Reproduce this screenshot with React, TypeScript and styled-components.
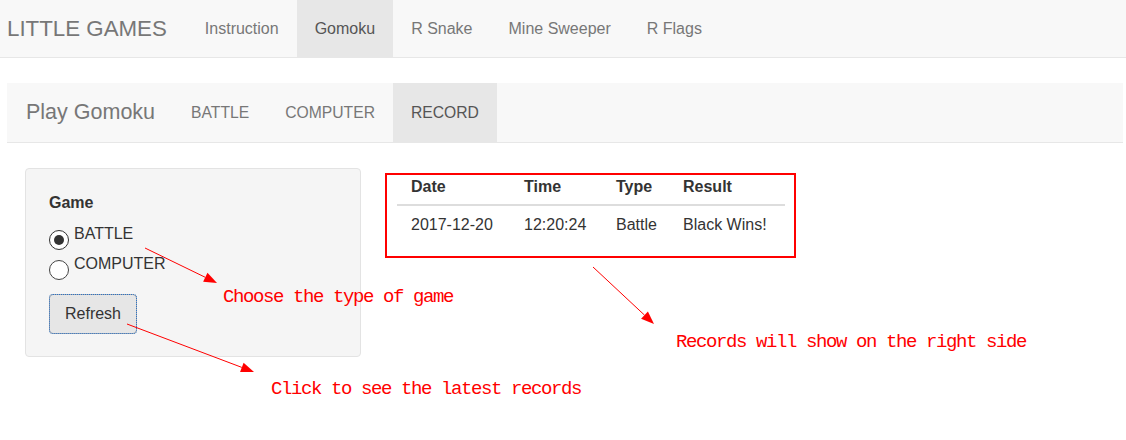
import React from "react";
import styled, { createGlobalStyle } from "styled-components";

const GlobalStyle = createGlobalStyle`
  html, body {
    margin: 0;
    padding: 0;
    background: #ffffff;
  }
  body {
    font-family: "Liberation Sans", Arial, sans-serif;
    color: #333333;
  }
  * { box-sizing: border-box; }
`;

const Page = styled.div`
  position: relative;
  width: 1126px;
  height: 440px;
  overflow: hidden;
`;

const TopNav = styled.nav`
  display: flex;
  align-items: stretch;
  height: 58px;
  background: #f8f8f8;
  border-bottom: 1px solid #e7e7e7;
`;

const Brand = styled.div<{ $size: number; $padL: number; $padR: number }>`
  display: flex;
  align-items: center;
  padding: 0 ${(p) => p.$padR}px 0 ${(p) => p.$padL}px;
  font-size: ${(p) => p.$size}px;
  color: #777777;
  white-space: nowrap;
`;

const NavItem = styled.div<{ $active?: boolean; $size?: number }>`
  display: flex;
  align-items: center;
  padding: 0 18px;
  font-size: ${(p) => p.$size ?? 16}px;
  color: ${(p) => (p.$active ? "#555555" : "#777777")};
  background: ${(p) => (p.$active ? "#e7e7e7" : "transparent")};
  white-space: nowrap;
`;

const SubNav = styled.nav`
  display: flex;
  align-items: stretch;
  height: 60px;
  margin: 25px 3px 0 7px;
  background: #f8f8f8;
  border-bottom: 1px solid #e7e7e7;
`;

const Content = styled.main`
  display: flex;
  align-items: flex-start;
  gap: 24px;
  padding: 25px 0 0 25px;
`;

const Well = styled.section`
  display: flex;
  flex-direction: column;
  align-items: flex-start;
  width: 336px;
  padding: 24px 24px 22px 23px;
  background: #f5f5f5;
  border: 1px solid #e3e3e3;
  border-radius: 4px;
`;

const GroupLabel = styled.div`
  font-size: 16px;
  font-weight: bold;
  line-height: 20px;
  margin-bottom: 10px;
`;

const RadioList = styled.div`
  display: flex;
  flex-direction: column;
  gap: 3px;
`;

const RadioRow = styled.label`
  display: flex;
  align-items: flex-start;
  gap: 5px;
  font-size: 16px;
  line-height: 20px;
  color: #333333;
  padding-top: 1px;
`;

const RadioDot = styled.span<{ $checked?: boolean }>`
  position: relative;
  flex: none;
  width: 20px;
  height: 20px;
  margin-top: 6px;
  border-radius: 50%;
  border: 1.5px solid ${(p) => (p.$checked ? "#333333" : "#444444")};
  background: #ffffff;

  &::after {
    content: "";
    display: ${(p) => (p.$checked ? "block" : "none")};
    position: absolute;
    left: 3.5px;
    top: 3.5px;
    width: 10px;
    height: 10px;
    border-radius: 50%;
    background: #333333;
  }
`;

const Button = styled.button`
  margin-top: 14px;
  width: 88px;
  height: 40px;
  padding: 0;
  font-family: "Liberation Sans", Arial, sans-serif;
  font-size: 16px;
  color: #333333;
  background: #e6e6e6;
  border: 1px solid #adadad;
  border-radius: 4px;
  outline: 1px dotted #2a72c8;
  outline-offset: -1px;
`;

const RecordBox = styled.section`
  margin-top: 5px;
  width: 411px;
  height: 85px;
  padding: 0 9px 0 10px;
  border: 2px solid #ff0000;
`;

const Table = styled.table`
  width: 388px;
  border-collapse: collapse;
  font-size: 16px;
  line-height: 20px;
  color: #333333;
`;

const Th = styled.th<{ $w: number }>`
  width: ${(p) => p.$w}px;
  text-align: left;
  font-weight: bold;
  padding: 2px 0 7px 14px;
  border-bottom: 2px solid #dddddd;
`;

const Td = styled.td`
  text-align: left;
  padding: 9px 0 0 14px;
`;

const Note = styled.div<{ $x: number; $y: number }>`
  position: absolute;
  left: ${(p) => p.$x}px;
  top: ${(p) => p.$y}px;
  font-family: "Liberation Mono", "Courier New", monospace;
  font-size: 19px;
  letter-spacing: -1.4px;
  line-height: 20px;
  color: #ff0000;
  white-space: pre;
`;

const Overlay = styled.svg`
  position: absolute;
  left: 0;
  top: 0;
  pointer-events: none;
`;

const arrows: [number, number, number, number][] = [
  [145, 248, 217, 283],
  [127, 324, 254, 372],
  [593, 267, 654, 324],
];

function Arrow({ x1, y1, x2, y2 }: { x1: number; y1: number; x2: number; y2: number }) {
  const ang = Math.atan2(y2 - y1, x2 - x1);
  const len = 13;
  const half = 5;
  const bx = x2 - len * Math.cos(ang);
  const by = y2 - len * Math.sin(ang);
  const px = -Math.sin(ang) * half;
  const py = Math.cos(ang) * half;
  return (
    <g>
      <line x1={x1} y1={y1} x2={bx} y2={by} stroke="#ff0000" strokeWidth={1} />
      <polygon
        points={`${x2},${y2} ${bx + px},${by + py} ${bx - px},${by - py}`}
        fill="#ff0000"
      />
    </g>
  );
}

export default function App() {
  return (
    <>
      <GlobalStyle />
      <Page>
        <TopNav>
          <Brand $size={22.3} $padL={7} $padR={20}>LITTLE GAMES</Brand>
          <NavItem>Instruction</NavItem>
          <NavItem $active>Gomoku</NavItem>
          <NavItem>R Snake</NavItem>
          <NavItem>Mine Sweeper</NavItem>
          <NavItem>R Flags</NavItem>
        </TopNav>

        <SubNav>
          <Brand $size={21.5} $padL={19} $padR={18}>Play Gomoku</Brand>
          <NavItem $size={15.7}>BATTLE</NavItem>
          <NavItem $size={15.7}>COMPUTER</NavItem>
          <NavItem $size={15.7} $active>RECORD</NavItem>
        </SubNav>

        <Content>
          <Well>
            <GroupLabel>Game</GroupLabel>
            <RadioList>
              <RadioRow>
                <RadioDot $checked />
                BATTLE
              </RadioRow>
              <RadioRow>
                <RadioDot />
                COMPUTER
              </RadioRow>
            </RadioList>
            <Button>Refresh</Button>
          </Well>

          <RecordBox>
            <Table>
              <thead>
                <tr>
                  <Th $w={113}>Date</Th>
                  <Th $w={92}>Time</Th>
                  <Th $w={67}>Type</Th>
                  <Th $w={116}>Result</Th>
                </tr>
              </thead>
              <tbody>
                <tr>
                  <Td>2017-12-20</Td>
                  <Td>12:20:24</Td>
                  <Td>Battle</Td>
                  <Td>Black Wins!</Td>
                </tr>
              </tbody>
            </Table>
          </RecordBox>
        </Content>

        <Overlay width={1126} height={440}>
          {arrows.map(([x1, y1, x2, y2], i) => (
            <Arrow key={i} x1={x1} y1={y1} x2={x2} y2={y2} />
          ))}
        </Overlay>

        <Note $x={223} $y={287}>Choose the type of game</Note>
        <Note $x={676} $y={332}>Records will show on the right side</Note>
        <Note $x={271} $y={379}>Click to see the latest records</Note>
      </Page>
    </>
  );
}
